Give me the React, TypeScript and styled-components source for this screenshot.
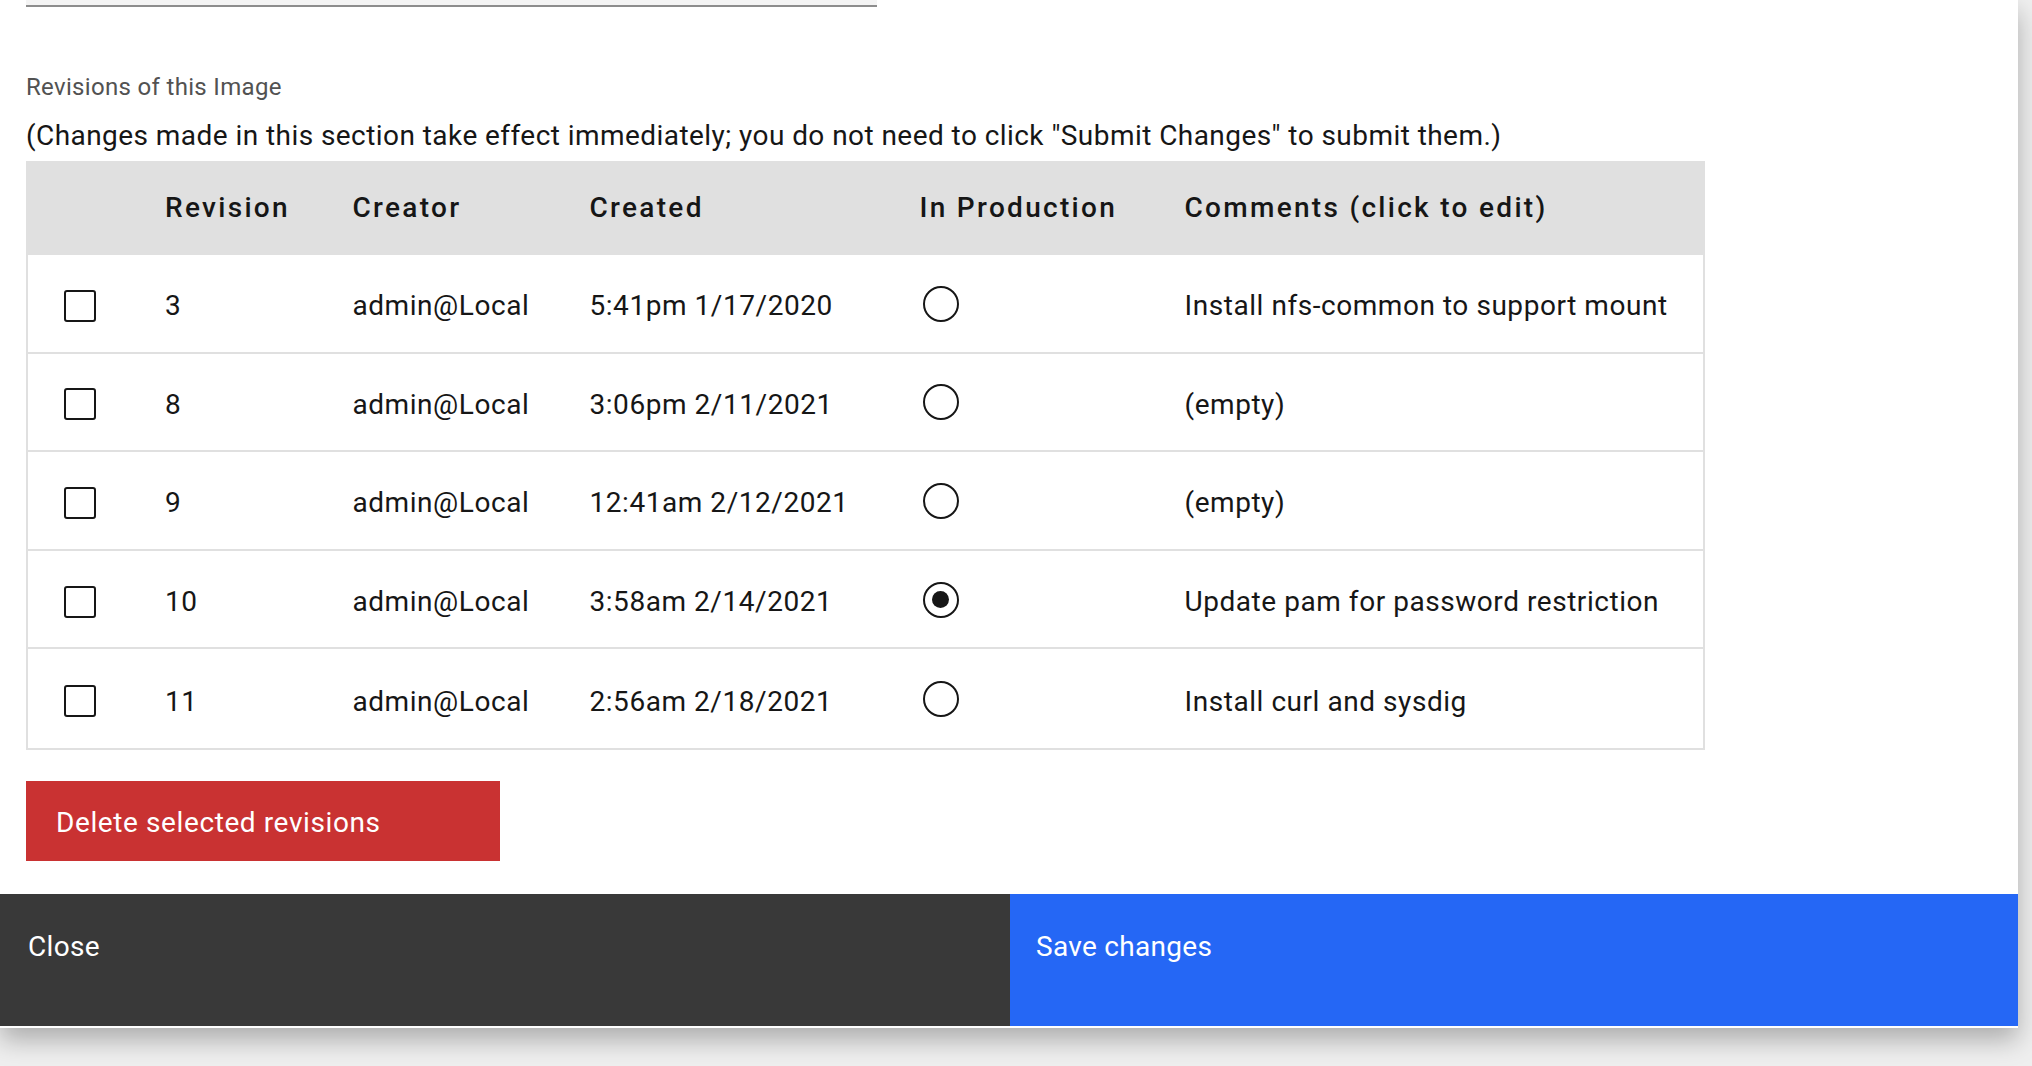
import React from "react";
import styled, { createGlobalStyle } from "styled-components";

const Global = createGlobalStyle`
  html, body { margin: 0; padding: 0; background: #efefef; }
  body { font-family: Roboto, "Noto Sans", "Liberation Sans", sans-serif; color: #161616; }
  * { box-sizing: border-box; }
`;

const Page = styled.div`
  width: 2032px;
  height: 1066px;
  overflow: hidden;
  background: #efefef;
`;

const Modal = styled.div`
  width: 2018px;
  background: #ffffff;
  padding-bottom: 2px;
  box-shadow: 0 12px 24px rgba(0, 0, 0, 0.28);
  display: flex;
  flex-direction: column;
`;

const Content = styled.div`
  padding: 0 26px 33px 26px;
  display: flex;
  flex-direction: column;
  align-items: flex-start;
`;

const InputStub = styled.div`
  width: 851px;
  height: 7px;
  background: #f4f4f4;
  border-bottom: 2px solid #8d8d8d;
`;

const Label = styled.div`
  margin-top: 64px;
  font-size: 24px;
  line-height: 32px;
  letter-spacing: 0.32px;
  color: #525252;
`;

const Note = styled.p`
  margin: 15px 0 0 0;
  font-size: 28px;
  line-height: 36px;
  letter-spacing: 0.44px;
  color: #161616;
`;

const Table = styled.div`
  margin-top: 7px;
  width: 1679px;
  border: 2px solid #e0e0e0;
  border-top: none;
`;

const cols = "137px 187.5px 237px 330px 265px 1fr";

const HeaderRow = styled.div`
  display: grid;
  grid-template-columns: ${cols};
  align-items: center;
  height: 94px;
  margin: 0 -2px;
  padding-left: 2px;
  background: #e0e0e0;
`;

const HeaderCell = styled.div`
  font-size: 28px;
  font-weight: 500;
  letter-spacing: 2.3px;
  color: #161616;
  padding-bottom: 2px;
`;

const Row = styled.div`
  display: grid;
  grid-template-columns: ${cols};
  align-items: center;
  height: 98.6px;
  padding-top: 5px;
  border-bottom: 2px solid #e0e0e0;
  &:last-child { border-bottom: none; }
`;

const Cell = styled.div`
  font-size: 28px;
  letter-spacing: 0.55px;
  color: #161616;
`;

const CheckCell = styled.div`
  padding-left: 36px;
  display: flex;
  align-items: center;
`;

const Checkbox = styled.span`
  width: 32px;
  height: 32px;
  border: 2.5px solid #161616;
  border-radius: 3px;
  background: #fff;
  display: block;
`;

const RadioCell = styled.div`
  padding-left: 3px;
  display: flex;
  align-items: center;
  margin-top: -4px;
`;

const Radio = styled.span<{ $checked?: boolean }>`
  width: 36px;
  height: 36px;
  border-radius: 50%;
  border: 2.5px solid #161616;
  background: #fff;
  display: flex;
  align-items: center;
  justify-content: center;
  &::after {
    content: "";
    display: ${(p) => (p.$checked ? "block" : "none")};
    width: 17px;
    height: 17px;
    border-radius: 50%;
    background: #161616;
  }
`;

const DeleteButton = styled.button`
  margin-top: 31px;
  width: 474px;
  height: 80px;
  border: none;
  background: #c93232;
  color: #ffffff;
  font-family: inherit;
  font-size: 28px;
  letter-spacing: 0.6px;
  text-align: left;
  padding: 3px 0 0 30px;
  cursor: pointer;
`;

const Footer = styled.div`
  display: grid;
  grid-template-columns: 1010px 1fr;
  height: 132px;
`;

const FooterButton = styled.button<{ $variant: "secondary" | "primary" }>`
  border: none;
  margin: 0;
  background: ${(p) => (p.$variant === "primary" ? "#2567f5" : "#393939")};
  color: #ffffff;
  font-family: inherit;
  font-size: 28px;
  line-height: 36px;
  letter-spacing: 0.3px;
  text-align: left;
  display: flex;
  align-items: flex-start;
  padding: 35px 0 0 ${(p) => (p.$variant === "primary" ? "26px" : "28px")};
  cursor: pointer;
`;

type Rev = { id: number; date: string; prod: boolean; comment: string };

const revisions: Rev[] = [
  { id: 3, date: "5:41pm 1/17/2020", prod: false, comment: "Install nfs-common to support mount" },
  { id: 8, date: "3:06pm 2/11/2021", prod: false, comment: "(empty)" },
  { id: 9, date: "12:41am 2/12/2021", prod: false, comment: "(empty)" },
  { id: 10, date: "3:58am 2/14/2021", prod: true, comment: "Update pam for password restriction" },
  { id: 11, date: "2:56am 2/18/2021", prod: false, comment: "Install curl and sysdig" },
];

export default function App() {
  return (
    <Page>
      <Global />
      <Modal>
        <Content>
          <InputStub />
          <Label>Revisions of this Image</Label>
          <Note>
            (Changes made in this section take effect immediately; you do not need to click "Submit Changes" to submit them.)
          </Note>
          <Table>
            <HeaderRow>
              <HeaderCell />
              <HeaderCell>Revision</HeaderCell>
              <HeaderCell>Creator</HeaderCell>
              <HeaderCell>Created</HeaderCell>
              <HeaderCell>In Production</HeaderCell>
              <HeaderCell>Comments (click to edit)</HeaderCell>
            </HeaderRow>
            {revisions.map((r) => (
              <Row key={r.id}>
                <CheckCell>
                  <Checkbox />
                </CheckCell>
                <Cell>{r.id}</Cell>
                <Cell>admin@Local</Cell>
                <Cell>{r.date}</Cell>
                <RadioCell>
                  <Radio $checked={r.prod} />
                </RadioCell>
                <Cell>{r.comment}</Cell>
              </Row>
            ))}
          </Table>
          <DeleteButton>Delete selected revisions</DeleteButton>
        </Content>
        <Footer>
          <FooterButton $variant="secondary">Close</FooterButton>
          <FooterButton $variant="primary">Save changes</FooterButton>
        </Footer>
      </Modal>
    </Page>
  );
}
